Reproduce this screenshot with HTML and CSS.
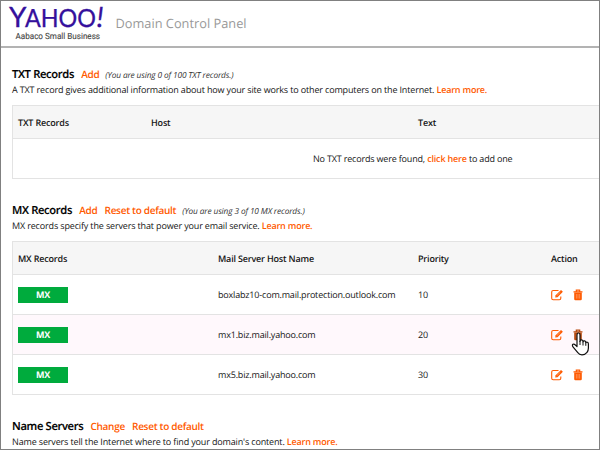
FILE: index.html
```
<!DOCTYPE html>
<html lang="en">
<head>
<meta charset="utf-8">
<title>Domain Control Panel</title>
<link rel="stylesheet" href="styles.css">
</head>
<body>
<svg class="symbols" width="0" height="0" aria-hidden="true">
  <symbol id="edit" viewBox="0 0 12 12">
    <path d="M7.5 1.5H2.2Q.7 1.5.7 3V9.300Q.7 10.800 2.200 10.800H8.300Q9.800 10.800 9.800 9.300V7.500" fill="none" stroke="currentColor" stroke-width="1.100"/>
    <path d="M4.200 8.500L4.600 6.200 10 .9 11.900 2.800 6.500 8.200Z" fill="currentColor"/>
    <path d="M5.700 6.700L9.300 3.200" stroke="#fff" stroke-opacity=".7" stroke-width=".6"/>
  </symbol>
  <symbol id="trash" viewBox="0 0 10 12">
    <path d="M.5 2.8H9.5M3.3 2.6V1.1H6.7V2.6" fill="none" stroke="currentColor" stroke-width="1.2"/>
    <path d="M1.2 3.4H8.8V10Q8.8 11.2 7.6 11.2H2.4Q1.2 11.2 1.2 10Z" fill="currentColor"/>
    <path d="M3.4 5V9.6M5 5V9.6M6.6 5V9.6" stroke="#fff" stroke-opacity=".5" stroke-width=".6"/>
  </symbol>
</svg>
<div class="page">
  <header class="header">
    <svg class="logo" width="100" height="40" viewBox="0 0 100 40">
      <text class="logo-name" y="21.500"><tspan x="0" font-size="28">Y</tspan><tspan x="16" font-size="25" textLength="71" lengthAdjust="spacingAndGlyphs">AHOO</tspan><tspan class="bang" x="87.500" font-size="28">!</tspan></text>
      <text class="logo-sub" x="6.500" y="33.500" textLength="84.500" lengthAdjust="spacingAndGlyphs">Aabaco Small Business</text>
    </svg>
    <h1 class="title">Domain Control Panel</h1>
  </header>
  <main class="main">
    <section class="section">
      <div class="heading"><h2>TXT Records</h2><a>Add</a><em>(You are using 0 of 100 TXT records.)</em></div>
      <p>A TXT record gives additional information about how your site works to other computers on the Internet. <a>Learn more.</a></p>
      <div class="table">
        <div class="row head txt-cols"><span>TXT Records</span><span>Host</span><span>Text</span></div>
        <div class="row empty"><span>No TXT records were found, <a>click here</a> to add one</span></div>
      </div>
    </section>
    <section class="section">
      <div class="heading"><h2>MX Records</h2><a>Add</a><a>Reset to default</a><em>(You are using 3 of 10 MX records.)</em></div>
      <p>MX records specify the servers that power your email service. <a>Learn more.</a></p>
      <div class="table">
        <div class="row head mx-cols"><span>MX Records</span><span>Mail Server Host Name</span><span>Priority</span><span>Action</span></div>
        <div class="row mx-cols"><b class="badge">MX</b><span>boxlabz10-com.mail.protection.outlook.com</span><span>10</span><span class="actions"><svg width="12" height="12"><use href="#edit"/></svg><svg width="10" height="12"><use href="#trash"/></svg></span></div>
        <div class="row mx-cols hover"><b class="badge">MX</b><span>mx1.biz.mail.yahoo.com</span><span>20</span><span class="actions"><svg width="12" height="12"><use href="#edit"/></svg><svg class="pressed" width="10" height="12"><use href="#trash"/></svg>
          <svg class="cursor" width="19" height="24" viewBox="0 0 19 24"><path d="M6 14.500V3Q6 1 7.500 1T9 3V9.500Q9.300 7.800 10.700 7.900T12 9.800Q12.400 8.700 13.600 8.900T14.800 10.700Q15.300 9.900 16.400 10.300T17.400 12V16Q17.400 18.500 16 20.300Q14 22.800 11 22.800T7 20.800L2.200 15.200Q.8 13 1.900 12.300T4.400 13Z" fill="#fff" stroke="#111" stroke-width="1.200" stroke-linejoin="round"/><path d="M9 9V13M12 9.800V13.500M14.800 10.700V13.800" stroke="#111"/></svg></span></div>
        <div class="row mx-cols"><b class="badge">MX</b><span>mx5.biz.mail.yahoo.com</span><span>30</span><span class="actions"><svg width="12" height="12"><use href="#edit"/></svg><svg width="10" height="12"><use href="#trash"/></svg></span></div>
      </div>
    </section>
    <section class="section">
      <div class="heading"><h2>Name Servers</h2><a>Change</a><a>Reset to default</a></div>
      <p>Name servers tell the Internet where to find your domain's content. <a>Learn more.</a></p>
    </section>
  </main>
</div>
</body>
</html>
```
FILE: styles.css
```
* { box-sizing: border-box; }
body { margin: 0; font-family: "Open Sans", sans-serif; font-size: 9px; letter-spacing: -.18px; color: #151515; text-rendering: geometricPrecision; }
.symbols { display: block; }
.page { width: 600px; height: 450px; border: 1px solid #808080; overflow: hidden; background: #fff; }
.header { height: 47px; display: flex; align-items: flex-start; padding-left: 8px; border-bottom: 2px solid #b3b3b3; letter-spacing: 0; }
.logo { margin-top: 4px; flex: none; overflow: visible; }
.logo-name { font-family: Lato, sans-serif; fill: #35109c; stroke: #35109c; stroke-width: .3px; }
.bang { font-style: italic; }
.logo-sub { font-family: Roboto, sans-serif; font-size: 8.500px; fill: #444; stroke: #444; stroke-width: .1px; }
.title { margin: 13px 0 0 6.500px; font-size: 12.800px; line-height: 18px; font-weight: 400; color: #999; white-space: nowrap; }
.main { padding: 17px 0 0 11px; }
.section { margin-bottom: 22px; white-space: nowrap; }
.heading { display: flex; align-items: baseline; height: 18px; line-height: 18px; }
.heading h2 { margin: 0; font-size: 11.200px; font-weight: 600; line-height: 18px; letter-spacing: -.34px; color: #000; -webkit-text-stroke: .15px #000; }
.heading a { font-size: 10px; margin-left: 7.200px; letter-spacing: -.3px; }
.heading em { font-size: 8.300px; margin-left: 6px; letter-spacing: -.13px; color: #333; }
a { color: #ff5a00; font-weight: 600; }
.section p { margin: 0; height: 13px; line-height: 13px; letter-spacing: -.15px; }
.section p a { letter-spacing: -.2px; }
.table { margin-top: 9px; border: 1px solid #e3e3e3; border-right: 0; }
.row { display: grid; align-items: center; height: 40px; padding-left: 5px; border-bottom: 1px solid #e3e3e3; }
.row:last-child { border-bottom: 0; height: 39px; }
.head { height: 33px; background: #f6f6f6; font-weight: 600; }
.txt-cols { grid-template-columns: 133px 267px 1fr; }
.mx-cols { grid-template-columns: 200px 200px 133px 1fr; }
.empty { padding-left: 300px; }
.badge { width: 50px; height: 16px; line-height: 16px; background: #00ab3d; color: #fff; text-align: center; font-size: 9px; font-weight: 700; }
.hover { background: #fff8fc; }
.actions { position: relative; display: flex; gap: 10px; color: #ff5a00; }
.pressed { color: #b5480c; }
.cursor { position: absolute; left: 20px; top: 3px; }
```
